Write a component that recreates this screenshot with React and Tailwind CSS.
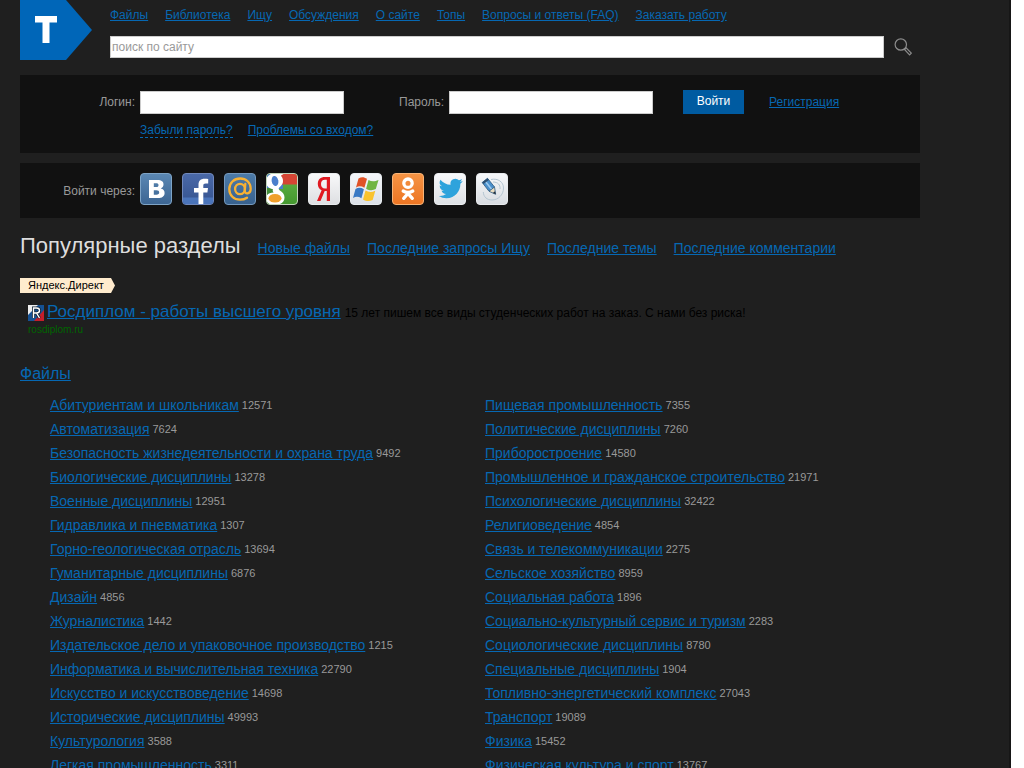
const left = [
  ["Абитуриентам и школьникам", 12571],
  ["Автоматизация", 7624],
  ["Безопасность жизнедеятельности и охрана труда", 9492],
  ["Биологические дисциплины", 13278],
  ["Военные дисциплины", 12951],
  ["Гидравлика и пневматика", 1307],
  ["Горно-геологическая отрасль", 13694],
  ["Гуманитарные дисциплины", 6876],
  ["Дизайн", 4856],
  ["Журналистика", 1442],
  ["Издательское дело и упаковочное производство", 1215],
  ["Информатика и вычислительная техника", 22790],
  ["Искусство и искусствоведение", 14698],
  ["Исторические дисциплины", 49993],
  ["Культурология", 3588],
  ["Легкая промышленность", 3311],
];

const right = [
  ["Пищевая промышленность", 7355],
  ["Политические дисциплины", 7260],
  ["Приборостроение", 14580],
  ["Промышленное и гражданское строительство", 21971],
  ["Психологические дисциплины", 32422],
  ["Религиоведение", 4854],
  ["Связь и телекоммуникации", 2275],
  ["Сельское хозяйство", 8959],
  ["Социальная работа", 1896],
  ["Социально-культурный сервис и туризм", 2283],
  ["Социологические дисциплины", 8780],
  ["Специальные дисциплины", 1904],
  ["Топливно-энергетический комплекс", 27043],
  ["Транспорт", 19089],
  ["Физика", 15452],
  ["Физическая культура и спорт", 13767],
];

const nav = ["Файлы", "Библиотека", "Ищу", "Обсуждения", "О сайте", "Топы", "Вопросы и ответы (FAQ)", "Заказать работу"];
const tabs = ["Новые файлы", "Последние запросы Ищу", "Последние темы", "Последние комментарии"];

function Link({ children, className = "" }) {
  return (
    <a href="#" className={"text-[#0668b3] underline " + className}>
      {children}
    </a>
  );
}

function Tile({ label, fill, fillEnd, stroke, children }) {
  const id = "tile-" + label.replace(/\W/g, "");
  return (
    <a href="#" aria-label={label} className="block size-8">
      <svg viewBox="0 0 32 32" className="size-8">
        <defs>
          <linearGradient id={id} x1="0" y1="0" x2="0" y2="1">
            <stop offset="0" stopColor={fill} />
            <stop offset="1" stopColor={fillEnd} />
          </linearGradient>
          <clipPath id={id + "-clip"}>
            <rect x="1" y="1" width="30" height="30" rx="3" />
          </clipPath>
        </defs>
        <rect x="0.5" y="0.5" width="31" height="31" rx="3.5" fill={"url(#" + id + ")"} stroke={stroke} />
        <g clipPath={"url(#" + id + "-clip)"}>{children}</g>
      </svg>
    </a>
  );
}

function Social() {
  return (
    <div className="flex gap-2.5">
      <Tile label="VK" fill="#5b88b4" fillEnd="#3c6592" stroke="#7ea4c6">
        <path
          fill="#fff"
          fillRule="evenodd"
          d="M9 7h8.500c4 0 6 1.700 6 4.500 0 2-1.100 3.300-2.800 3.900 2.500.5 3.900 2 3.900 4.500 0 3.400-2.600 5.100-6.800 5.100H9zm4.800 3.300v3.800h2.200c1.700 0 2.500-.6 2.500-1.900s-.8-1.900-2.400-1.900zm0 7v4.400h2.600c1.900 0 2.800-.8 2.800-2.200s-.9-2.200-2.800-2.200z"
        />
      </Tile>
      <Tile label="Facebook" fill="#4a69a8" fillEnd="#35538f" stroke="#7088bb">
        <rect x="1" y="24.500" width="30" height="7" fill="#4a74ba" />
        <path fill="#fff" d="M16.500 32V19.500h-4.500V15h4.500v-3.200c0-4 2.300-6 6-6 1.500 0 2.700.1 3.700.2v4.400h-2.500c-1.800 0-2.400.9-2.400 2.200V15h4.700l-.6 4.500h-4.100V32z" />
      </Tile>
      <Tile label="Mail.ru" fill="#4d7ba8" fillEnd="#38618d" stroke="#7599bd">
        <g fill="none" stroke="#f8b133" strokeWidth="2.300" strokeLinecap="round">
          <ellipse cx="16" cy="16" rx="4.900" ry="5.200" />
          <path d="M21.300 11l-.5 6.700c-.2 4.300 5.900 3.500 5.900-2C26.700 9.500 22 5.500 16.200 5.500 10 5.500 5.300 10 5.300 16c0 6.400 4.500 10.700 10.700 10.700 2.600 0 5.100-.7 7-2" />
        </g>
      </Tile>
      <Tile label="Google" fill="#63b346" fillEnd="#44982f" stroke="#c3d6bd">
        <path d="M0 0h17v16H0z" fill="#4b7fcc" />
        <path d="M15 0h17v11.500H15z" fill="#d64534" />
        <path d="M0 15h8v17H0z" fill="#438d3a" />
        <path
          d="M10 0C4 0 0 3.500 0 8.500c0 4.500 3 7.500 7 7.700-.6 1.200-.3 2.300.6 3.300C3 19.600 0 21.500 0 26c0 4 3.500 6 8.500 6 6 0 10-2.800 10-7.500 0-5.500-5.800-6.500-5.800-8.700 0-2 4.300-3 4.300-7.800 0-2.300-.8-4-2.200-5.200L19 0z"
          fill="#fff"
        />
        <ellipse cx="9" cy="8" rx="3.300" ry="5" transform="rotate(-12 9 8)" fill="#4b7fcc" />
        <ellipse cx="9" cy="25.300" rx="6.500" ry="4.300" fill="#f0a02c" />
      </Tile>
      <Tile label="Yandex" fill="#f9f9fa" fillEnd="#dddfe2" stroke="#e9ebed">
        <path
          fill="#e01a22"
          fillRule="evenodd"
          d="M22 4v24h-3.200V18h-2.100L12.500 28H9l4.600-10.700c-2.400-1.200-3.800-3.200-3.800-6.200C9.800 6.500 12.500 4 17 4zm-3.200 2.700H17c-2.500 0-4 1.400-4 4.400s1.500 4.400 4 4.400h1.800z"
        />
      </Tile>
      <Tile label="Windows Live" fill="#f5f7fa" fillEnd="#dbe0e7" stroke="#e8ecf0">
        <path d="M8.500 5.500c3-1.800 5.500-1.600 8.500.3l-2.600 9c-3-1.800-5.500-2-8.400-.3z" fill="#e05227" />
        <path d="M18.500 7c3 1.800 6 1.800 10 0l-2.700 9.100c-3 1.700-6.500 1.500-9.700-.4z" fill="#70b543" />
        <path d="M5.500 16c2.800-1.700 5.500-1.500 8.400.3l-2.500 9C8.500 23.500 6 23.300 3 25z" fill="#3979c4" />
        <path d="M15.500 17.500c3 1.800 6 2 9.800.3l-2.600 9.100c-3 1.700-6.500 1.500-9.700-.4z" fill="#f9c32e" />
      </Tile>
      <Tile label="Odnoklassniki" fill="#f59445" fillEnd="#ed7523" stroke="#f8b477">
        <g fill="none" stroke="#fff" strokeWidth="3.300" strokeLinecap="round">
          <circle cx="16" cy="10.200" r="4.200" />
          <path d="M11.200 18q4.800 3 9.600 0M16 20.500l-4.300 4.800M16 20.500l4.300 4.800" />
        </g>
      </Tile>
      <Tile label="Twitter" fill="#f8f9fb" fillEnd="#dee1e5" stroke="#eceef0">
        <path
          transform="translate(4.800 3.500)"
          fill="#2ea3dc"
          d="M23.950 4.570a10 10 0 01-2.820.77 4.960 4.960 0 002.160-2.720 9.900 9.900 0 01-3.120 1.180 4.920 4.920 0 00-8.380 4.480C7.690 8.090 4.070 6.130 1.640 3.160a4.920 4.920 0 001.520 6.570 4.900 4.900 0 01-2.230-.61v.06a4.920 4.920 0 003.950 4.830 5 5 0 01-2.210.08 4.940 4.940 0 004.600 3.420A9.870 9.870 0 010 19.540a13.990 13.990 0 007.550 2.210c9.050 0 14-7.500 14-13.980 0-.21 0-.42-.02-.63a9.940 9.940 0 002.460-2.550z"
        />
      </Tile>
      <Tile label="LiveJournal" fill="#f7f8fa" fillEnd="#d8dce1" stroke="#e8eaed">
        <path d="M15 6.500c7-1.500 12.500 2.500 12.500 8.500 0 7-5.500 12-11.500 12-5 0-8.500-3-8.700-8" fill="none" stroke="#b4c5d1" />
        <path d="M17 9c5 0 7.500 3 7 7" fill="none" stroke="#b4c5d1" />
        <path d="M6.200 9.500l5.300-4.200 7 8.700-5.500 4.300z" fill="#4a8fcb" stroke="#2b587f" strokeWidth="0.800" />
        <path d="M9 8l6.800 8.500" stroke="#9ccaee" strokeWidth="1.600" />
        <path d="M13 18.300l5.500-4.300 1.200 7.300z" fill="#e9dcc0" stroke="#2b587f" strokeWidth="0.800" />
        <path d="M16.800 20l2.200-1.800.7 3.100z" fill="#202c3b" />
        <path d="M6.200 9.500l5.300-4.200 1.300 1.600-5.300 4.200z" fill="#2c4f72" />
      </Tile>
    </div>
  );
}

function Section({ items }) {
  return (
    <ul>
      {items.map(([name, count]) => (
        <li key={name} className="flex h-6 items-center gap-[3px] text-[14px] leading-6 whitespace-nowrap">
          <Link>{name}</Link>
          <span className="text-[11px] text-[#999]">{count}</span>
        </li>
      ))}
    </ul>
  );
}

export default function App() {
  return (
    <div className="h-screen overflow-hidden bg-white pr-[13px] font-['Liberation_Sans',Arial,sans-serif] text-[12px] text-[#999]">
      <div className="h-full overflow-hidden border-r-2 border-[#161616] bg-[#1f1f1f] pl-5">
        <div className="max-w-[900px]">
          <header className="flex h-[75px]">
            <a href="#" aria-label="Главная" className="w-[90px] shrink-0">
              <svg viewBox="0 0 72 60" className="h-[60px] w-[72px]">
                <path d="M0 0h46l26 30-26 30H0z" fill="#0066b8" />
                <path d="M15 16h22v6.500h-7.500V43h-7V22.500H15z" fill="#fff" />
              </svg>
            </a>
            <div className="grow pt-[7px]">
              <nav className="flex gap-[17px] leading-4 whitespace-nowrap">
                {nav.map((t) => (
                  <Link key={t}>{t}</Link>
                ))}
              </nav>
              <form className="mt-[13px] flex items-center" onSubmit={(e) => e.preventDefault()}>
                <input
                  aria-label="поиск по сайту"
                  placeholder="поиск по сайту"
                  className="h-[22px] min-w-0 grow border border-[#ccc] bg-white px-px text-[12px] text-black placeholder:text-[#999]"
                />
                <button aria-label="Найти" className="flex w-9 justify-end pr-2">
                  <svg viewBox="0 0 18 18" className="size-[18px]" fill="none" stroke="#8c8c8c" strokeWidth="1.200">
                    <circle cx="6.800" cy="6.500" r="5.700" />
                    <path d="M10.500 11.500l1.600-1.600 5.200 5.300-1.700 1.700z" />
                  </svg>
                </button>
              </form>
            </div>
          </header>

          <form className="h-[78px] bg-[#111] pt-[15px]" onSubmit={(e) => e.preventDefault()}>
            <div className="flex h-6 items-center">
              <label htmlFor="login" className="w-[115px] text-right">Логин:</label>
              <input id="login" className="ml-[5px] h-[23px] w-[204px] border border-[#ccc] bg-white px-px text-black" />
              <label htmlFor="password" className="w-[100px] text-right">Пароль:</label>
              <input id="password" type="password" className="ml-[5px] h-[23px] w-[204px] border border-[#ccc] bg-white px-px text-black" />
              <button className="ml-[30px] h-6 w-[61px] bg-[#005ba1] pb-0.5 text-white">Войти</button>
              <Link className="ml-[25px]">Регистрация</Link>
            </div>
            <div className="mt-[9px] flex gap-[15px] pl-[120px] leading-[14px]">
              <a href="#" className="border-b border-dashed border-[#0668b3] text-[#0668b3]">Забыли пароль?</a>
              <Link>Проблемы со входом?</Link>
            </div>
          </form>

          <div className="mt-2.5 flex h-[55px] items-center bg-[#111] pb-[3px]">
            <span className="mr-[5px] w-[115px] pt-[3px] text-right">Войти через:</span>
            <Social />
          </div>

          <div className="mt-[15px] flex items-baseline gap-[17px] text-[14px] whitespace-nowrap">
            <h1 className="text-[22px] leading-[26px] text-[#ddd]">Популярные разделы</h1>
            {tabs.map((t) => (
              <Link key={t}>{t}</Link>
            ))}
          </div>

          <aside className="mt-[19px] h-[86px]">
            <div className="flex h-[15px]">
              <a href="#" className="bg-[#ffebcd] pl-2 text-[11px] leading-[15px] text-black">Яндекс.Директ</a>
              <svg viewBox="0 0 11 15" className="h-[15px] w-[11px]">
                <path d="M0 0h7l4 7.500L7 15H0z" fill="#ffebcd" />
              </svg>
            </div>
            <div className="mt-[9px] flex items-baseline pl-2 leading-5 text-black">
              <svg viewBox="0 0 16 16" className="mr-[3px] size-4 self-center">
                <path d="M0 0h16v16H0z" fill="#155194" />
                <path d="M0 0h10L0 10z" fill="#eee" />
                <path d="M16 5v11H6z" fill="#c41e2a" />
                <path d="M5.500 13V3h3c4 0 4 5 0 5h-3m3 0l3 5" fill="none" stroke="#123" strokeWidth="3" />
                <path d="M5.500 13V3h3c4 0 4 5 0 5h-3m3 0l3 5" fill="none" stroke="#fff" strokeWidth="1.400" />
              </svg>
              <Link className="mr-1 text-[17px]">Росдиплом - работы высшего уровня</Link>
              <span>15 лет пишем все виды студенческих работ на заказ. С нами без риска!</span>
            </div>
            <div className="pl-2 text-[10px] leading-[14px] text-[#060]">rosdiplom.ru</div>
          </aside>

          <main>
            <h2 className="text-[16px] leading-5">
              <Link>Файлы</Link>
            </h2>
            <div className="mt-[9px] grid grid-cols-2 pl-[30px]">
              <Section items={left} />
              <Section items={right} />
            </div>
          </main>
        </div>
      </div>
    </div>
  );
}
